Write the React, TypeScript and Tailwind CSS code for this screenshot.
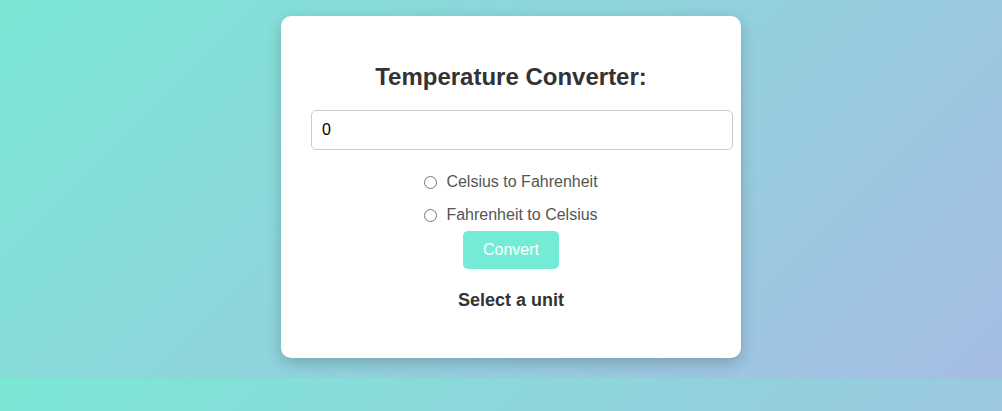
import { useState } from "react"

export default function App() {
  const [value, setValue] = useState("0")
  const [unit, setUnit] = useState("")
  const [result, setResult] = useState("Select a unit")

  const convert = () => {
    const n = parseFloat(value)
    if (unit === "c2f") setResult(`${((n * 9) / 5 + 32).toFixed(2)} °F`)
    else if (unit === "f2c") setResult(`${(((n - 32) * 5) / 9).toFixed(2)} °C`)
    else setResult("Select a unit")
  }

  return (
    <div className="min-h-screen bg-[linear-gradient(135deg,#7ce7d5,#a6bde4)] bg-[length:100%_378px] bg-repeat font-['Liberation_Sans',Arial,sans-serif]">
      <div className="flex justify-center pt-[16px] pb-[21px]">
        <div className="ml-[20px] flex w-[460px] flex-col items-center rounded-[10px] bg-white px-[30px] pt-[30px] pb-[47px] shadow-[0_5px_15px_rgba(0,0,0,0.2)]">
          <h2 className="mt-[17px] mb-[19px] text-[24px] leading-[28px] font-bold text-[#333]">
            Temperature Converter:
          </h2>

          <input
            type="text"
            value={value}
            onChange={(e) => setValue(e.target.value)}
            className="box-content h-[18px] w-[400px] self-start rounded-[5px] border border-[#ccc] p-[10px] text-[16px] leading-[18px] text-black outline-none"
          />

          <div className="mt-[22px] flex flex-col gap-[13px] text-[16px] text-[#555]">
            <label className="flex h-[20px] items-center">
              <input
                type="radio"
                name="unit"
                checked={unit === "c2f"}
                onChange={() => setUnit("c2f")}
                className="my-0 mr-[9px] ml-0 h-[13px] w-[13px]"
              />
              Celsius to Fahrenheit
            </label>
            <label className="flex h-[20px] items-center">
              <input
                type="radio"
                name="unit"
                checked={unit === "f2c"}
                onChange={() => setUnit("f2c")}
                className="my-0 mr-[9px] ml-0 h-[13px] w-[13px]"
              />
              Fahrenheit to Celsius
            </label>
          </div>

          <button
            onClick={convert}
            className="mt-[6px] h-[38px] rounded-[5px] bg-[#74ebd5] px-[20px] text-[16px] text-white"
          >
            Convert
          </button>

          <p className="mt-[21px] text-[18px] leading-[21px] font-bold text-[#333]">{result}</p>
        </div>
      </div>
    </div>
  )
}
